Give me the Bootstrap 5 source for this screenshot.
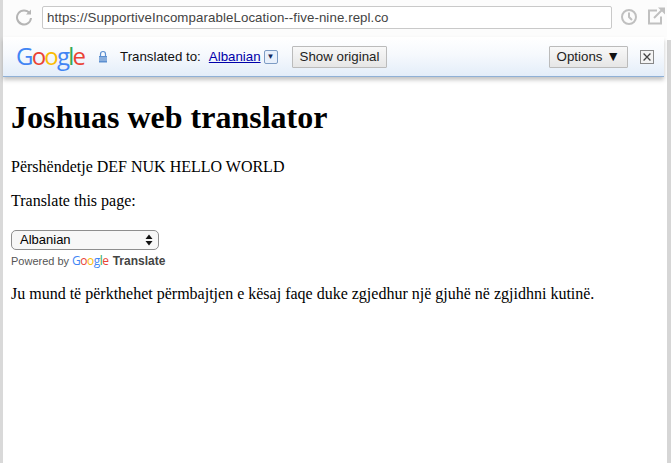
<!DOCTYPE html>
<html lang="sq"><head><meta charset="utf-8"><title>Joshuas web translator</title>
<link rel="stylesheet" href="https://cdn.jsdelivr.net/npm/bootstrap@5.3.0/dist/css/bootstrap.min.css">
<style>
html,body{height:463px;overflow:hidden}
body{background:#fff;font-family:"Liberation Serif",serif;color:#000;font-size:16px}
.topbar{height:37px;background:#fcfcfc;padding:6px 0 0 12px;gap:9px}
.reloadicon{margin-top:2px}
.urlbox{flex:1;height:23px;border:1px solid #c9c9c9;background:#fff;border-radius:2px;font:13.3px/21px "Liberation Sans",sans-serif;letter-spacing:.08px;color:#444;padding-left:4px;white-space:nowrap;overflow:hidden;margin-right:-2px}
.toolicons{gap:7px}
.frameline{height:463px}
.leftedge{width:3px;background:#d9d9d9;flex:none}
.rightedge{width:3px;flex:none;background:#fff}
.scrollgrip{width:4px;height:423px;background:#d6d6d6}
.gbar{height:40px;background:linear-gradient(#fff 0,#f6f9fd 45%,#e3edf9 100%);border-bottom:1px solid #8fb0d6;box-shadow:0 3px 4px rgba(90,90,90,.35);font:13.3px "Liberation Sans",sans-serif;color:#111;padding:0 10px 0 13px;position:relative}
.glogo{font:24px/1 "Open Sans",sans-serif;letter-spacing:-1.8px;width:70px;margin:-2px 12px 0 0}
.gb{color:#4285f4}.gr{color:#ea4335}.gy{color:#fbbc05}.gg{color:#34a853}
.tlink{color:#00a;text-decoration:underline;margin-left:8px}
.tarrow{width:14px;height:14px;border:1px solid #7d9cc4;background:#e8f0fb;border-radius:2px;margin-left:3px;font-size:8px;line-height:12px;text-align:center;color:#12285c}
.gbtn{height:22px;border:1px solid #bbb;background:linear-gradient(#f8f8f8,#e6e6e6);font:13.3px/20px "Liberation Sans",sans-serif;padding:0 7px;color:#222;border-radius:1px}
.showbtn{margin-left:14px}
.optarrow{font-size:14px;line-height:1;color:#111}
.xbox{width:14px;height:14px;border:1px solid #888;background:#f4f4f4;margin-left:12px}
.pagebody{padding:22px 0 0 8px}
.pagebody h1{font:700 32px/37px "Liberation Serif",serif;margin:0 0 22px}
.pagebody p{font-size:16px;line-height:18px;margin:0 0 16px}
.gsel{width:148px;height:20px;border:1px solid #8e8e8e;border-radius:5px;background:#f7f7f7;font:13px/18px "Liberation Sans",sans-serif;padding:0 5px 0 8px;margin-top:20px;color:#000}
.powered{font:11px/14px "Liberation Sans",sans-serif;color:#555;margin:2px 0 16px;white-space:nowrap}
.powered strong{font-size:12px;color:#444;margin-left:1px}
.glogosm{font:400 12px "Open Sans",sans-serif;letter-spacing:-.5px;margin-left:3px}
</style></head><body>
<div class="d-flex frameline">
<div class="leftedge"></div>
<div class="flex-grow-1 d-flex flex-column" style="min-width:0">
<div class="d-flex topbar">
<svg class="reloadicon" width="18" height="18" viewBox="0 0 18 18" fill="none" stroke="#b5b5b5" stroke-width="2"><path d="M14.600 5.200A7 7 0 1 0 16 10"/><path d="M16 1.500v5h-5" fill="#b5b5b5" stroke="none"/></svg>
<div class="urlbox">https://SupportiveIncomparableLocation--five-nine.repl.co</div>
<div class="d-flex toolicons">
<svg width="20" height="20" viewBox="0 0 20 20" fill="none" stroke="#c0c0c0" stroke-width="2"><circle cx="10" cy="11" r="7"/><path d="M10 6.500V11l3 3"/></svg>
<svg width="21" height="20" viewBox="0 0 21 20" fill="none" stroke="#c0c0c0" stroke-width="2"><path d="M11 4.500H3v13h12v-7"/><path d="M8 12 17 3"/><path d="M12 1.500h7v7z" fill="#c0c0c0" stroke="none"/></svg>
</div>
</div>
<div class="d-flex">
<div class="gbar d-flex align-items-center flex-grow-1">
<div class="glogo"><span class="gb">G</span><span class="gr">o</span><span class="gy">o</span><span class="gb">g</span><span class="gg">l</span><span class="gr">e</span></div>
<svg width="10" height="13" viewBox="0 0 10 13" class="me-2"><path d="M2.500 6V4a2.500 2.500 0 0 1 5 0v2" fill="none" stroke="#5c8fd0" stroke-width="1.200"/><rect x="1" y="6" width="8" height="6.500" fill="#5c8fd0"/><path d="M1 8h8M1 10h8" stroke="#dbe7f6" stroke-width=".7"/></svg>
<span class="ms-1">Translated to:</span>
<span class="tlink">Albanian</span>
<span class="tarrow">▼</span>
<button class="gbtn showbtn" type="button">Show original</button>
<span class="flex-grow-1"></span>
<button class="gbtn" type="button">Options <span class="optarrow">▼</span></button>
<svg class="xbox" width="14" height="14" viewBox="0 0 14 14" stroke="#444" stroke-width="1.500"><path d="M3 3l8 8M11 3l-8 8"/></svg>
</div>
<div class="rightedge"></div>
</div>
<div class="pagebody">
<h1>Joshuas web translator</h1>
<p>Përshëndetje DEF NUK HELLO WORLD</p>
<p>Translate this page:</p>
<div class="gsel d-flex justify-content-between align-items-center"><span>Albanian</span><svg width="8" height="12" viewBox="0 0 8 12"><path d="M4 0.500 7.500 5H.5zM4 11.500.5 7h7z" fill="#111"/></svg></div>
<div class="powered">Powered by<span class="glogosm"><span class="gb">G</span><span class="gr">o</span><span class="gy">o</span><span class="gb">g</span><span class="gg">l</span><span class="gr">e</span></span> <strong>Translate</strong></div>
<p>Ju mund të përkthehet përmbajtjen e kësaj faqe duke zgjedhur një gjuhë në zgjidhni kutinë.</p>
</div>
</div>
<div class="rightedge d-flex flex-column justify-content-end" style="width:4px"><div class="scrollgrip"></div></div>
</div>
</body></html>
